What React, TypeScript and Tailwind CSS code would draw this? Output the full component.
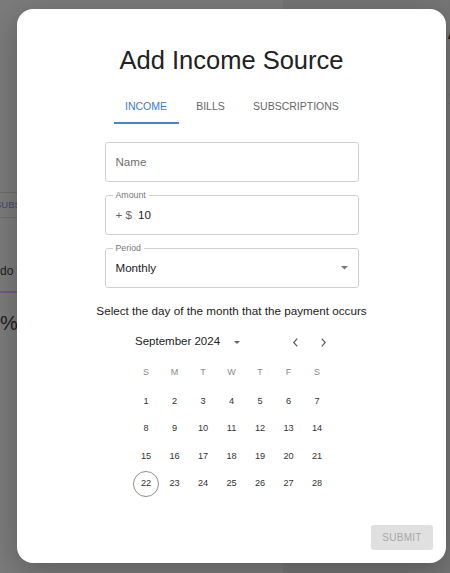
import React from "react";

const Caret = ({ className }: { className?: string }) => (
  <svg viewBox="0 0 10 5" className={className} aria-hidden>
    <path d="M0 0 L5 5 L10 0 Z" fill="currentColor" />
  </svg>
);

const Chevron = ({ dir }: { dir: "left" | "right" }) => (
  <svg viewBox="0 0 8 12" className="w-[7px] h-[11px] text-[#555]" aria-hidden>
    <path
      d={dir === "left" ? "M6 1.5 L2 6 L6 10.5" : "M2 1.5 L6 6 L2 10.5"}
      fill="none"
      stroke="currentColor"
      strokeWidth="1.3"
    />
  </svg>
);

const weekdays = ["S", "M", "T", "W", "T", "F", "S"];
const weeks = [
  [1, 2, 3, 4, 5, 6, 7],
  [8, 9, 10, 11, 12, 13, 14],
  [15, 16, 17, 18, 19, 20, 21],
  [22, 23, 24, 25, 26, 27, 28],
];

export default function App() {
  return (
    <div className="relative w-[450px] h-[573px] overflow-hidden bg-[#757575] font-['Liberation_Sans',Arial,sans-serif]">
      {/* dimmed page behind the dialog */}
      <div className="flex h-full">
        <div className="w-[283px] h-full bg-[#7b7b7b] flex flex-col pt-[192px]">
          <div className="h-[26px] border-y border-[#6c6c6c] flex items-center overflow-hidden">
            <span className="ml-[-5px] text-[9.5px] text-[#3b4a6e]">SUBS</span>
          </div>
          <div className="mt-[45px] text-[12px] leading-[16px] text-[#1c1c1c]">do y</div>
          <div className="mt-[12px] h-[2px] w-[30px] bg-[#6e5a80]" />
          <div className="mt-[18px] text-[20px] leading-[24px] text-[#1c1c1c]">%</div>
        </div>
        <div className="flex-1 h-full bg-[#757575] flex flex-col items-end pt-[20px]">
          <span className="text-[20px] leading-[24px] text-[#1e1e1e] mr-[-11px]">A</span>
          <span className="mt-[46px] text-[11px] text-[#5a5a5a] mr-[-3px]">)</span>
        </div>
      </div>

      {/* dialog */}
      <div className="absolute left-[17px] top-[9px] w-[429px] h-[554px] rounded-[16px] bg-white shadow-[0_8px_30px_rgba(0,0,0,0.25)] flex flex-col items-center">
        <h2 className="mt-[35px] h-[32px] leading-[32px] text-[25.5px] text-[#222]">Add Income Source</h2>

        {/* tabs */}
        <div className="mt-[14px] flex h-[34px]">
          <div className="relative w-[65px] flex items-center justify-center text-[10.5px] text-[#3b7bd4]">
            INCOME
            <div className="absolute left-0 right-0 bottom-0 h-[2px] bg-[#4a83d0]" />
          </div>
          <div className="w-[64px] flex items-center justify-center text-[10.5px] text-[#666]">
            BILLS
          </div>
          <div className="w-[107px] flex items-center justify-center text-[10.5px] text-[#666]">
            SUBSCRIPTIONS
          </div>
        </div>

        {/* fields */}
        <div className="mt-[18px] w-[254px] flex flex-col gap-[13px]">
          <div className="h-[40px] rounded-[3px] border border-[#d0d0d0] flex items-center px-[10px] text-[11.6px] text-[#6e6e6e]">
            Name
          </div>
          <div className="relative h-[40px] rounded-[3px] border border-[#d0d0d0] flex items-center px-[10px] text-[11.6px]">
            <span className="absolute left-[7px] top-[-6px] bg-white px-[3px] text-[8.8px] leading-[10px] text-[#777]">
              Amount
            </span>
            <span className="text-[#666]">+ $</span>
            <span className="ml-[6px] text-[#222]">10</span>
          </div>
          <div className="relative h-[40px] rounded-[3px] border border-[#d0d0d0] flex items-center pl-[10px] pr-[10px] text-[11.6px]">
            <span className="absolute left-[7px] top-[-6px] bg-white px-[3px] text-[8.8px] leading-[10px] text-[#777]">
              Period
            </span>
            <span className="text-[#222]">Monthly</span>
            <Caret className="ml-auto w-[7px] h-[3.5px] text-[#777]" />
          </div>
        </div>

        <p className="mt-[15px] h-[16px] leading-[16px] text-[11.7px] text-[#222]">
          Select the day of the month that the payment occurs
        </p>

        {/* calendar */}
        <div className="mt-[8px] w-[227px] h-[30px] flex items-center pl-[17px] pr-[12px]">
          <span className="text-[11.5px] text-[#222]">September 2024</span>
          <span className="ml-[9px] w-[16px] flex justify-center">
            <Caret className="w-[6px] h-[3px] text-[#666]" />
          </span>
          <span className="ml-auto w-[20px] flex justify-center">
            <Chevron dir="left" />
          </span>
          <span className="ml-[8px] w-[20px] flex justify-center">
            <Chevron dir="right" />
          </span>
        </div>
        <div className="mt-[2px] w-[199.5px] grid grid-cols-7 h-[28px] items-center">
          {weekdays.map((d, i) => (
            <span key={i} className="text-center text-[9px] text-[#8a8a8a]">
              {d}
            </span>
          ))}
        </div>
        <div className="mt-[1px] w-[199.5px] flex flex-col">
          {weeks.map((w, i) => (
            <div key={i} className="grid grid-cols-7 h-[27.5px]">
              {w.map((d) => (
                <div key={d} className="flex items-center justify-center">
                  <span
                    className={
                      d === 22
                        ? "w-[26px] h-[26px] rounded-full border border-[#8f8f8f] flex items-center justify-center text-[9.2px] text-[#333]"
                        : "text-[9.2px] text-[#333]"
                    }
                  >
                    {d}
                  </span>
                </div>
              ))}
            </div>
          ))}
        </div>

        <div className="mt-auto self-stretch flex justify-end p-[13px]">
          <div className="w-[62px] h-[25px] rounded-[3px] bg-[#e0e0e0] flex items-center justify-center text-[10px] tracking-[0.3px] text-[#a8a8a8]">
            SUBMIT
          </div>
        </div>
      </div>
    </div>
  );
}
